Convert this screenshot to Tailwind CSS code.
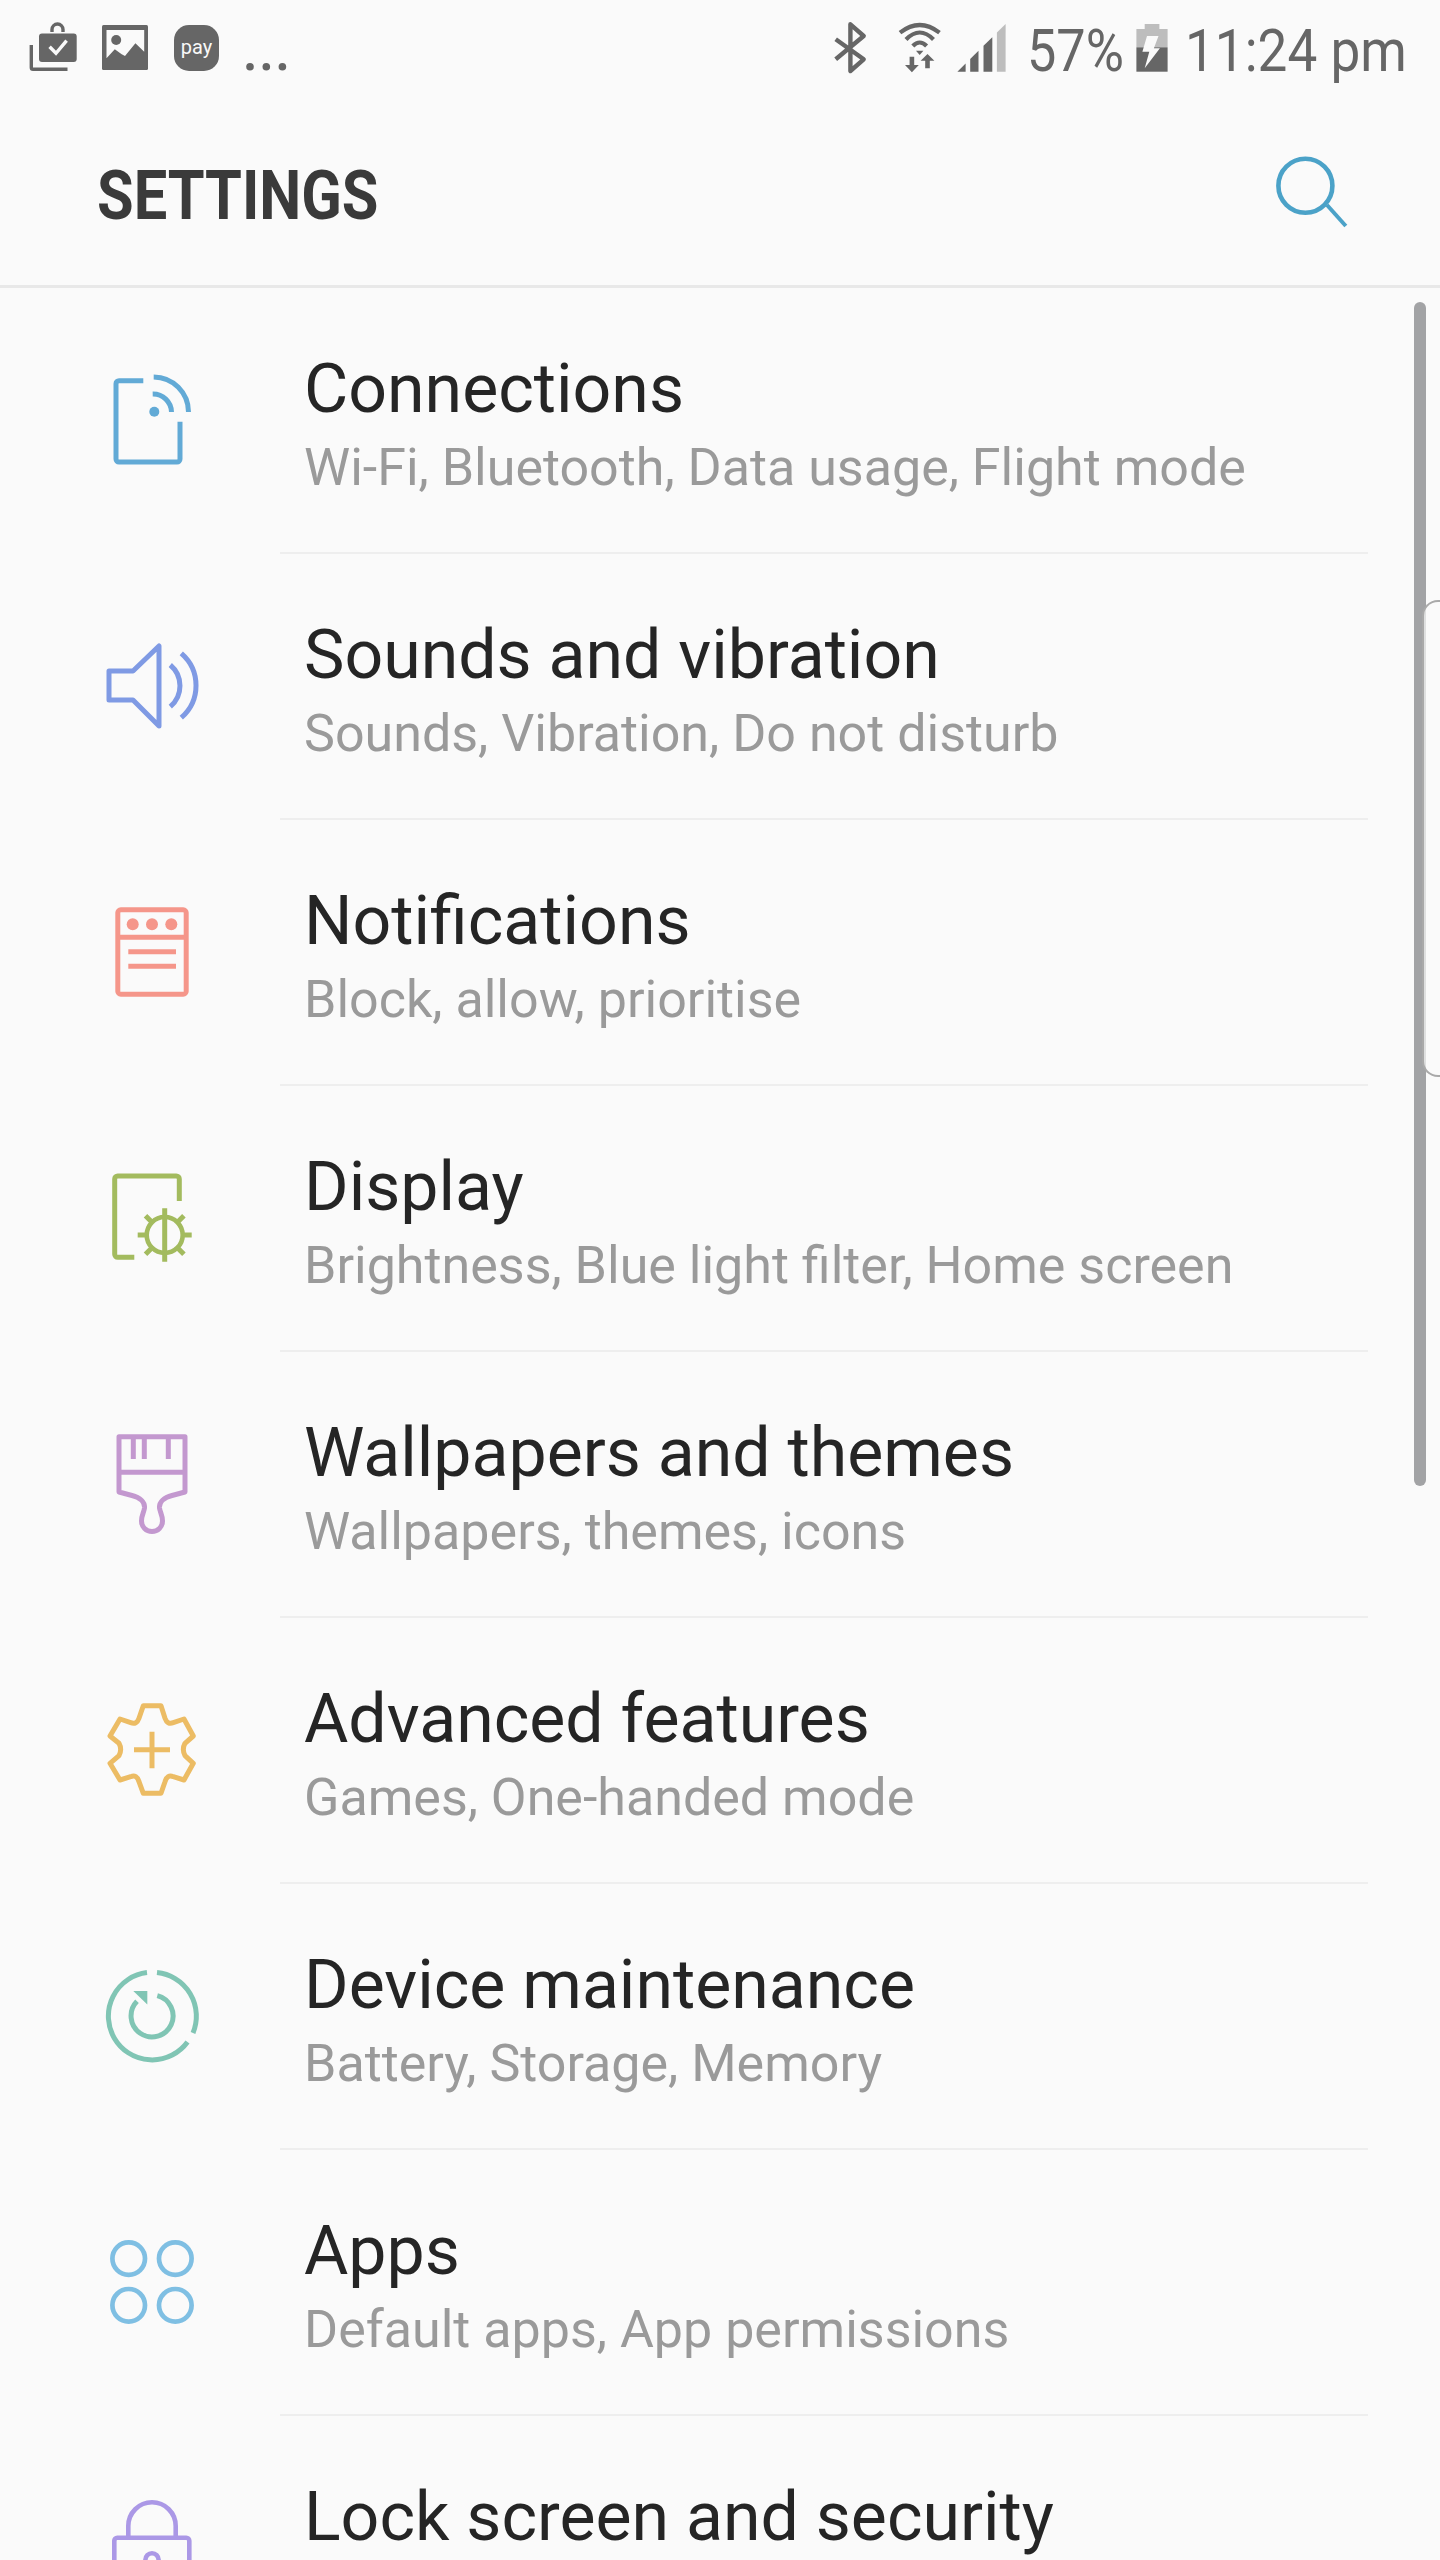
<!DOCTYPE html>
<html lang="en">
<head>
    <meta charset="UTF-8">
    <meta name="viewport" content="width=device-width, initial-scale=1.0">
    <title>Settings</title>
    <script src="https://cdn.jsdelivr.net/npm/@tailwindcss/browser@4"></script>
</head>
<body class="bg-[#fafafa] font-['Roboto',sans-serif]">
<div class="relative h-[2560px] w-[1440px] overflow-hidden bg-[#fafafa]">

    <!-- status bar -->
    <div class="flex h-[90px] items-start pt-[20px] text-[#666666]">
        <svg class="ml-[28px] h-[55px] w-[50px] shrink-0" viewBox="28 20 50 55" fill="#666666">
            <path d="M31.3 45V67.5Q31.3 69.3 33 69.3H67.5" fill="none" stroke="#666666" stroke-width="3.4"/>
            <path d="M52 32V29.5A5.4 5.4 0 0 1 63 29.5V32" fill="none" stroke="#666666" stroke-width="3.4"/>
            <rect x="39" y="33.5" width="37.7" height="28.5" rx="3"/>
            <path d="M49.6 46.7L56 53.3L66.6 40.7" fill="none" stroke="#fafafa" stroke-width="3.4"/>
        </svg>
        <svg class="ml-[24px] h-[55px] w-[46px] shrink-0" viewBox="102 20 46 55" fill="#666666">
            <rect x="102" y="25" width="46" height="45" rx="1.5"/>
            <path d="M106.5 30H144.2V51.7L135.4 43.3L125 56L121.7 54.3L114.8 49.3L106.5 58.3Z" fill="#fafafa"/>
            <circle cx="116.2" cy="40" r="5"/>
        </svg>
        <div class="ml-[26px] mt-[5px] flex h-[46px] w-[45px] shrink-0 items-center justify-center rounded-[15px] bg-[#666666] pb-[3px] text-[20px] leading-none text-[#f8f8f8]">pay</div>
        <svg class="ml-[25px] h-[55px] w-[44px] shrink-0" viewBox="244 20 44 55" fill="#666666">
            <circle cx="250" cy="66.7" r="3.8"/>
            <circle cx="266.3" cy="66.7" r="3.8"/>
            <circle cx="282.4" cy="66.7" r="3.8"/>
        </svg>
        <svg class="ml-[544px] h-[55px] w-[36px] shrink-0" viewBox="832 20 36 55" fill="none" stroke="#666666" stroke-width="4.4" stroke-linejoin="round">
            <path d="M835.7 39.3L863.7 59.3L850.4 71V24.3L863.7 36L835.7 59.3"/>
        </svg>
        <svg class="ml-[30px] h-[55px] w-[44px] shrink-0" viewBox="898 20 44 55" fill="none" stroke="#666666" stroke-width="4.2">
            <path d="M900 32.7Q919.7 17.3 939.5 32.7"/>
            <path d="M906 39.5Q919.7 25.5 933.5 39.5"/>
            <path d="M912.8 46Q919.7 39 926.6 46"/>
            <path d="M916 50.7H923.4L919.7 55Z" fill="#666666" stroke="none"/>
            <path d="M911.9 56.7V66M927.5 60V68.3" stroke-width="4.6"/>
            <path d="M905 65H918.8L911.9 72.3ZM920.6 60.7H934.4L927.5 54Z" fill="#666666" stroke="none"/>
        </svg>
        <svg class="ml-[15px] h-[55px] w-[50px] shrink-0" viewBox="957 20 50 55" fill="#666666">
            <path d="M957.4 71.7L965.6 63.5V71.7Z"/>
            <path d="M970.2 59L978.5 50.8V71.7H970.2Z"/>
            <path d="M983.5 45.8L992.3 37.2V71.7H983.5Z"/>
            <path d="M996.9 32.6L1005.6 24V71.7H996.9Z" fill="#bdbdbd"/>
        </svg>
        <div class="ml-[20px] mt-[1px] h-[55px] w-[94px] shrink-0 origin-left scale-x-[0.87] whitespace-nowrap text-[60px] leading-[60px]">57%</div>
        <svg class="ml-[15px] h-[55px] w-[33px] shrink-0" viewBox="1136 20 33 55">
            <path d="M1144.7 24H1159.4V29H1167.6V47.3H1136.4V29H1144.7Z" fill="#bdbdbd"/>
            <rect x="1136.4" y="47.3" width="31.2" height="24.4" fill="#666666"/>
            <path d="M1147 36H1158.5L1153.9 48.3H1159.9L1144.7 68.3L1149.3 51.7H1142.4Z" fill="#fafafa"/>
        </svg>
        <div class="ml-[16px] mt-[1px] h-[55px] w-[220px] shrink-0 origin-left scale-x-[0.885] whitespace-nowrap text-[60px] leading-[60px]">11:24 pm</div>
    </div>

    <!-- app bar -->
    <header class="flex h-[198px] items-start justify-between border-b-[3px] border-[#e8e8e8]">
        <h1 class="ml-[97px] mt-[66px] origin-left scale-x-[0.875] whitespace-nowrap text-[68px] font-bold leading-[80px] text-[#3a3a3a]">SETTINGS</h1>
        <svg class="mr-[88px] mt-[60px] h-[80px] w-[80px]" viewBox="1272 150 80 80" fill="none" stroke="#4ba2c8">
            <circle cx="1305.4" cy="185.7" r="27" stroke-width="4.6"/>
            <path d="M1327 205L1345.8 226" stroke-width="4"/>
        </svg>
    </header>

    <!-- settings list -->
    <ul>
        <li class="flex h-[266px]">
            <svg class="ml-[80px] mt-[62px] h-[140px] w-[140px] shrink-0" viewBox="0 0 140 140" fill="none" stroke="#62aad6" stroke-width="5">
                <path d="M63.3 30.7H39A3 3 0 0 0 36 33.7V109A3 3 0 0 0 39 112H97A3 3 0 0 0 100 109V71.7"/>
                <path d="M73.7 27A35 35 0 0 1 108.5 62"/>
                <path d="M72.7 44A18.5 18.5 0 0 1 91.5 62"/>
                <circle cx="74.3" cy="61.7" r="5" fill="#62aad6" stroke="none"/>
            </svg>
            <div class="ml-[60px] w-[1088px] border-b-2 border-[#eeeeee] pl-[24px] pt-[62px]">
                <div class="text-[68px] leading-[78px] text-[#252525]">Connections</div>
                <div class="mt-[9px] text-[52px] leading-[62px] text-[#9a9a9a]">Wi-Fi, Bluetooth, Data usage, Flight mode</div>
            </div>
        </li>
        <li class="flex h-[266px]">
            <svg class="ml-[80px] mt-[62px] h-[140px] w-[140px] shrink-0" viewBox="0 0 140 140" fill="none" stroke="#7f9ae4" stroke-width="5" stroke-linejoin="round">
                <path d="M29 55H53L79 30V110L53 84H29Z"/>
                <path d="M90.3 49A27.3 27.3 0 0 1 90.3 90.7"/>
                <path d="M101.3 37.3A42.6 42.6 0 0 1 101.3 101.7"/>
            </svg>
            <div class="ml-[60px] w-[1088px] border-b-2 border-[#eeeeee] pl-[24px] pt-[62px]">
                <div class="text-[68px] leading-[78px] text-[#252525]">Sounds and vibration</div>
                <div class="mt-[9px] text-[52px] leading-[62px] text-[#9a9a9a]">Sounds, Vibration, Do not disturb</div>
            </div>
        </li>
        <li class="flex h-[266px]">
            <svg class="ml-[80px] mt-[62px] h-[140px] w-[140px] shrink-0" viewBox="0 0 140 140" fill="none" stroke="#f5968a" stroke-width="5">
                <rect x="37.8" y="27.8" width="68.4" height="84.4" rx="3"/>
                <path d="M37.8 55.3H106.2M48.3 69.7H96M48.3 84.3H96"/>
                <g fill="#f5968a" stroke="none">
                    <circle cx="52.7" cy="42.3" r="6"/>
                    <circle cx="72" cy="42.3" r="6"/>
                    <circle cx="91.3" cy="42.3" r="6"/>
                </g>
            </svg>
            <div class="ml-[60px] w-[1088px] border-b-2 border-[#eeeeee] pl-[24px] pt-[62px]">
                <div class="text-[68px] leading-[78px] text-[#252525]">Notifications</div>
                <div class="mt-[9px] text-[52px] leading-[62px] text-[#9a9a9a]">Block, allow, prioritise</div>
            </div>
        </li>
        <li class="flex h-[266px]">
            <svg class="ml-[80px] mt-[62px] h-[140px] w-[140px] shrink-0" viewBox="0 0 140 140" fill="none" stroke="#a3bb5e" stroke-width="5">
                <path d="M99.3 53V31A3 3 0 0 0 96.3 28H37.7A3 3 0 0 0 34.7 31V106.3A3 3 0 0 0 37.7 109.3H54.3"/>
                <circle cx="84.7" cy="87" r="18" stroke-width="4.6"/>
                <path d="M84.7 60.3V113.7M57.7 87H67M102.4 87H111.7M65.5 67.8L72 74.3M103.9 67.8L97.4 74.3M65.5 106.2L72 99.7M103.9 106.2L97.4 99.7"/>
            </svg>
            <div class="ml-[60px] w-[1088px] border-b-2 border-[#eeeeee] pl-[24px] pt-[62px]">
                <div class="text-[68px] leading-[78px] text-[#252525]">Display</div>
                <div class="mt-[9px] text-[52px] leading-[62px] text-[#9a9a9a]">Brightness, Blue light filter, Home screen</div>
            </div>
        </li>
        <li class="flex h-[266px]">
            <svg class="ml-[80px] mt-[62px] h-[140px] w-[140px] shrink-0" viewBox="0 0 140 140" fill="none" stroke="#c398cf" stroke-width="5" stroke-linejoin="round">
                <path d="M39 22.7H105V78L92 81.5C84 83.5 79 88 79.5 94C80 98 82.5 101 82.5 107A10.5 10.5 0 0 1 61.5 107C61.5 101 64 98 64.5 94C65 88 60 83.5 52 81.5L39 78Z"/>
                <path d="M39 58.3H105M53.3 22.7V45M64.3 22.7V45M88.3 22.7V45"/>
            </svg>
            <div class="ml-[60px] w-[1088px] border-b-2 border-[#eeeeee] pl-[24px] pt-[62px]">
                <div class="text-[68px] leading-[78px] text-[#252525]">Wallpapers and themes</div>
                <div class="mt-[9px] text-[52px] leading-[62px] text-[#9a9a9a]">Wallpapers, themes, icons</div>
            </div>
        </li>
        <li class="flex h-[266px]">
            <svg class="ml-[80px] mt-[62px] h-[140px] w-[140px] shrink-0" viewBox="0 0 140 140" fill="none" stroke="#ecbc64" stroke-width="5" stroke-linejoin="round">
                <path d="M63.3 25.7H81L85 38.3Q87.3 45 93.3 42.7L104 39L113.3 56L105 63.3Q101.7 69.3 105 75.7L113.3 83.3L104 100L93.3 96.7Q87.3 94 85 101.7L81 113.3H63.3L59 101.7Q56.7 94 50.7 96.7L40 100L30 83.3L39 75.7Q42.3 69.3 39 63.3L30 56L40 39L50.7 42.7Q56.7 45 59 38.3Z"/>
                <path d="M54 69.7H90M72 51.7V88.3" stroke-linejoin="miter"/>
            </svg>
            <div class="ml-[60px] w-[1088px] border-b-2 border-[#eeeeee] pl-[24px] pt-[62px]">
                <div class="text-[68px] leading-[78px] text-[#252525]">Advanced features</div>
                <div class="mt-[9px] text-[52px] leading-[62px] text-[#9a9a9a]">Games, One-handed mode</div>
            </div>
        </li>
        <li class="flex h-[266px]">
            <svg class="ml-[80px] mt-[62px] h-[140px] w-[140px] shrink-0" viewBox="0 0 140 140" fill="none" stroke="#80c5b4" stroke-width="5">
                <path d="M77 26.6A43.8 43.8 0 0 1 113 87"/>
                <path d="M107.5 96A43.8 43.8 0 1 1 67 26.6"/>
                <path d="M77.3 49.6A21 21 0 1 1 57 55.3"/>
                <path d="M53.3 45H67.3V58.5Z" fill="#80c5b4" stroke="none"/>
            </svg>
            <div class="ml-[60px] w-[1088px] border-b-2 border-[#eeeeee] pl-[24px] pt-[62px]">
                <div class="text-[68px] leading-[78px] text-[#252525]">Device maintenance</div>
                <div class="mt-[9px] text-[52px] leading-[62px] text-[#9a9a9a]">Battery, Storage, Memory</div>
            </div>
        </li>
        <li class="flex h-[266px]">
            <svg class="ml-[80px] mt-[62px] h-[140px] w-[140px] shrink-0" viewBox="0 0 140 140" fill="none" stroke="#7fbfe3" stroke-width="4.7">
                <circle cx="48.7" cy="46.6" r="16.3"/>
                <circle cx="95.3" cy="46.6" r="16.3"/>
                <circle cx="48.7" cy="93.3" r="16.3"/>
                <circle cx="95.3" cy="93.3" r="16.3"/>
            </svg>
            <div class="ml-[60px] w-[1088px] border-b-2 border-[#eeeeee] pl-[24px] pt-[62px]">
                <div class="text-[68px] leading-[78px] text-[#252525]">Apps</div>
                <div class="mt-[9px] text-[52px] leading-[62px] text-[#9a9a9a]">Default apps, App permissions</div>
            </div>
        </li>
        <li class="flex h-[144px]">
            <svg class="ml-[80px] mt-[62px] h-[82px] w-[140px] shrink-0" viewBox="0 0 140 82" fill="none" stroke="#ab98e6" stroke-width="4.6">
                <path d="M48.3 59.7V48A23.7 23.7 0 0 1 95.7 48V59.7"/>
                <rect x="34.3" y="59.7" width="75" height="70" rx="3"/>
                <circle cx="72" cy="81.8" r="6.6"/>
            </svg>
            <div class="ml-[60px] w-[1088px] pl-[24px] pt-[62px]">
                <div class="text-[68px] leading-[78px] text-[#252525]">Lock screen and security</div>
            </div>
        </li>
    </ul>

    <!-- scrollbar and edge panel handle lie over the list -->
    <div class="absolute left-[1414px] top-[302px] h-[1184px] w-[12px] rounded-full bg-[#a2a3a5]"></div>
    <div class="absolute left-[1422px] top-[600px] h-[477px] w-[18px] rounded-l-[16px] border-y-2 border-l-2 border-[#a9a9a9] bg-[#fafafa]/70"></div>
</div>
</body>
</html>
